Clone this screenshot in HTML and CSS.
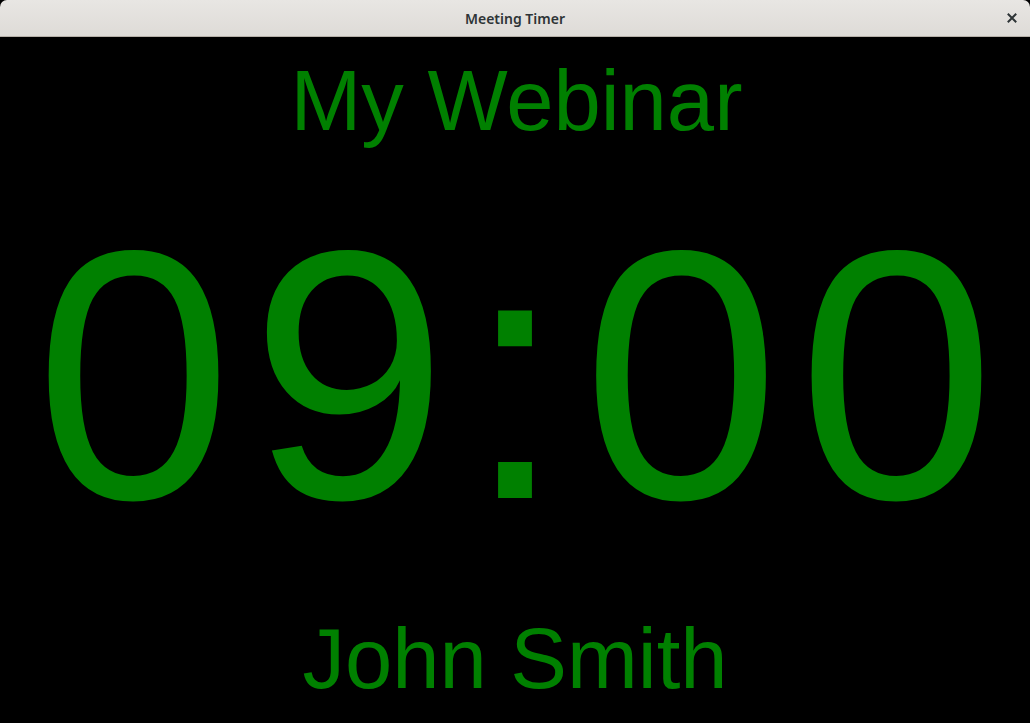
FILE: index.html
```html
<!DOCTYPE html>
<html>
<head>
<meta charset="utf-8">
<title>Meeting Timer</title>
<link rel="stylesheet" href="styles.css">
</head>
<body>
<div class="window">
  <header class="titlebar">
    <span class="title">Meeting Timer</span>
    <button class="close" aria-label="Close">
      <svg width="10" height="10" viewBox="0 0 10 10"><path d="M1.5 1.5 L8.5 8.5 M8.5 1.5 L1.5 8.5" stroke="#2e3436" stroke-width="2" stroke-linecap="square"/></svg>
    </button>
  </header>
  <main class="content">
    <div class="event">My Webinar</div>
    <div class="clock">09:00</div>
    <div class="speaker">John Smith</div>
  </main>
</div>
</body>
</html>
```
FILE: styles.css
```css
html, body {
  margin: 0;
  padding: 0;
  background: #000;
}
.window {
  width: 1030px;
  height: 723px;
  display: flex;
  flex-direction: column;
  background: #000;
  overflow: hidden;
}
.titlebar {
  height: 36px;
  flex: 0 0 36px;
  border-bottom: 1px solid #b6b0a8;
  background: linear-gradient(#e8e6e3, #dedbd7);
  border-radius: 7px 7px 0 0;
  display: flex;
  align-items: center;
  justify-content: center;
  position: relative;
}
.title {
  font-family: "Noto Sans", "DejaVu Sans", sans-serif;
  font-size: 14px;
  font-weight: 600;
  color: #2e3436;
}
.close {
  position: absolute;
  right: 13px;
  top: 13px;
  width: 10px;
  height: 10px;
  padding: 0;
  border: 0;
  background: none;
  display: flex;
}
.content {
  flex: 1;
  display: flex;
  flex-direction: column;
  align-items: center;
  color: #008000;
  font-family: "Liberation Sans", Arial, sans-serif;
}
.event {
  font-size: 85px;
  line-height: 85px;
  margin-top: 21px;
  padding-left: 3px;
}
.clock {
  font-size: 355px;
  line-height: 355px;
  margin-top: 55px;
  letter-spacing: 18px;
  padding-left: 18px;
}
.speaker {
  font-size: 85px;
  line-height: 85px;
  margin-top: 63px;
}
```
